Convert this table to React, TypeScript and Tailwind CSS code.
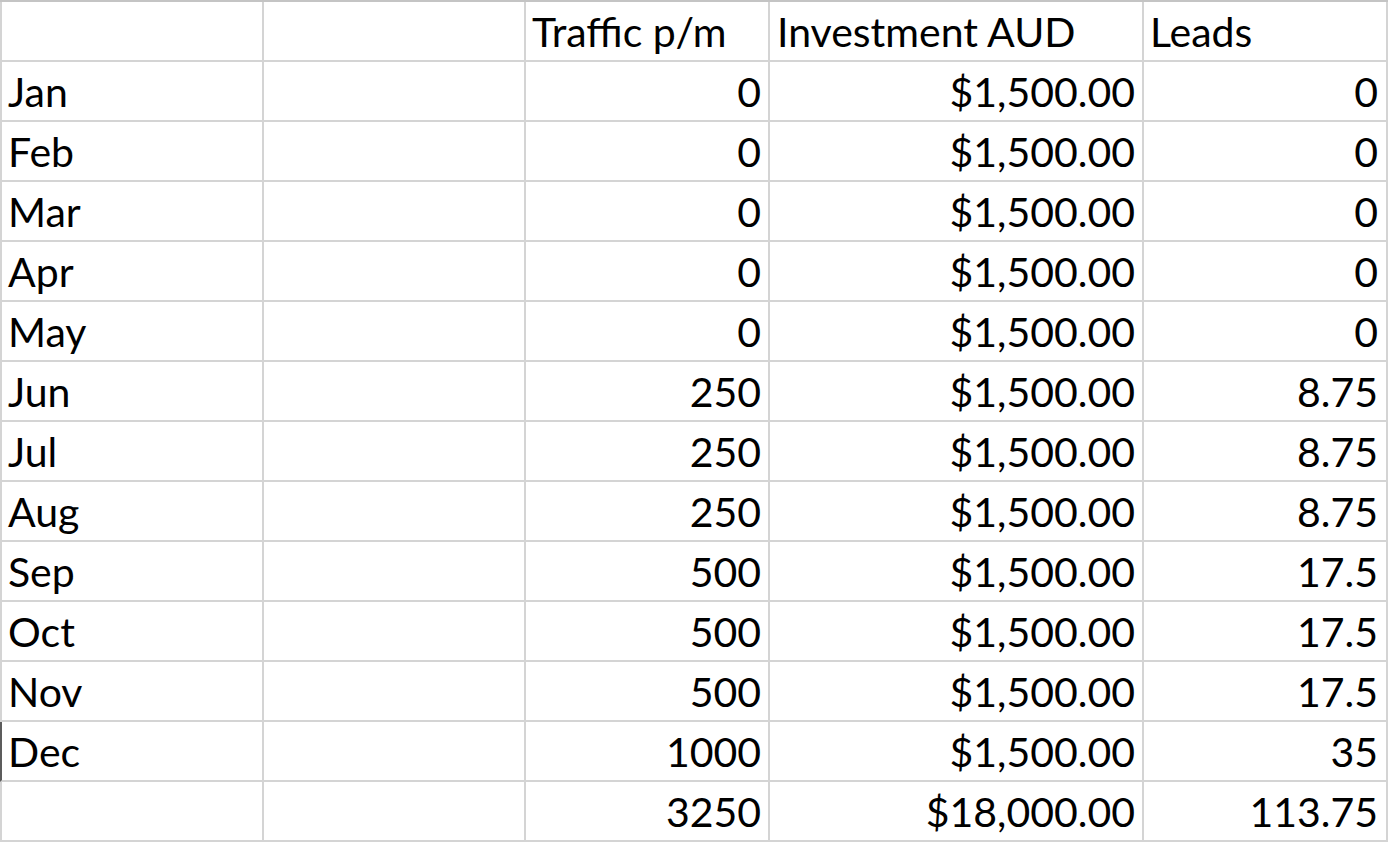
const rows: [string, string, string, string][] = [
  ["Jan", "0", "$1,500.00", "0"],
  ["Feb", "0", "$1,500.00", "0"],
  ["Mar", "0", "$1,500.00", "0"],
  ["Apr", "0", "$1,500.00", "0"],
  ["May", "0", "$1,500.00", "0"],
  ["Jun", "250", "$1,500.00", "8.75"],
  ["Jul", "250", "$1,500.00", "8.75"],
  ["Aug", "250", "$1,500.00", "8.75"],
  ["Sep", "500", "$1,500.00", "17.5"],
  ["Oct", "500", "$1,500.00", "17.5"],
  ["Nov", "500", "$1,500.00", "17.5"],
  ["Dec", "1000", "$1,500.00", "35"],
  ["", "3250", "$18,000.00", "113.75"],
];

const cell = "flex items-end border-r-2 border-b-2 border-[#d4d4d4] pb-[8px] leading-none whitespace-nowrap overflow-hidden";

export default function App() {
  return (
    <div
      className="w-[1388px] h-[842px] bg-white text-black text-[41px] overflow-hidden"
      style={{ fontFamily: "Lato, 'Open Sans', sans-serif" }}
    >
      <div className="grid grid-cols-[264px_262px_244px_374px_244px] auto-rows-[60px] border-t-2 border-[#c4c4c4]">
        <div className={`${cell} border-l-2 pl-[6px]`} />
        <div className={cell} />
        <div className={`${cell} pl-[6px]`}>Traffic p/m</div>
        <div className={`${cell} pl-[7px]`}>Investment AUD</div>
        <div className={`${cell} pl-[6px]`}>Leads</div>
        {rows.map(([m, t, inv, l]) => (
          <div key={m + t} className="contents">
            <div
              className={`${cell} border-l-2 pl-[6px] ${m === "Dec" ? "border-l-[#5c5c5c]" : ""}`}
            >
              {m}
            </div>
            <div className={cell} />
            <div className={`${cell} justify-end pr-[7px]`}>{t}</div>
            <div className={`${cell} justify-end pr-[7px]`}>{inv}</div>
            <div className={`${cell} justify-end pr-[8px]`}>{l}</div>
          </div>
        ))}
      </div>
    </div>
  );
}
